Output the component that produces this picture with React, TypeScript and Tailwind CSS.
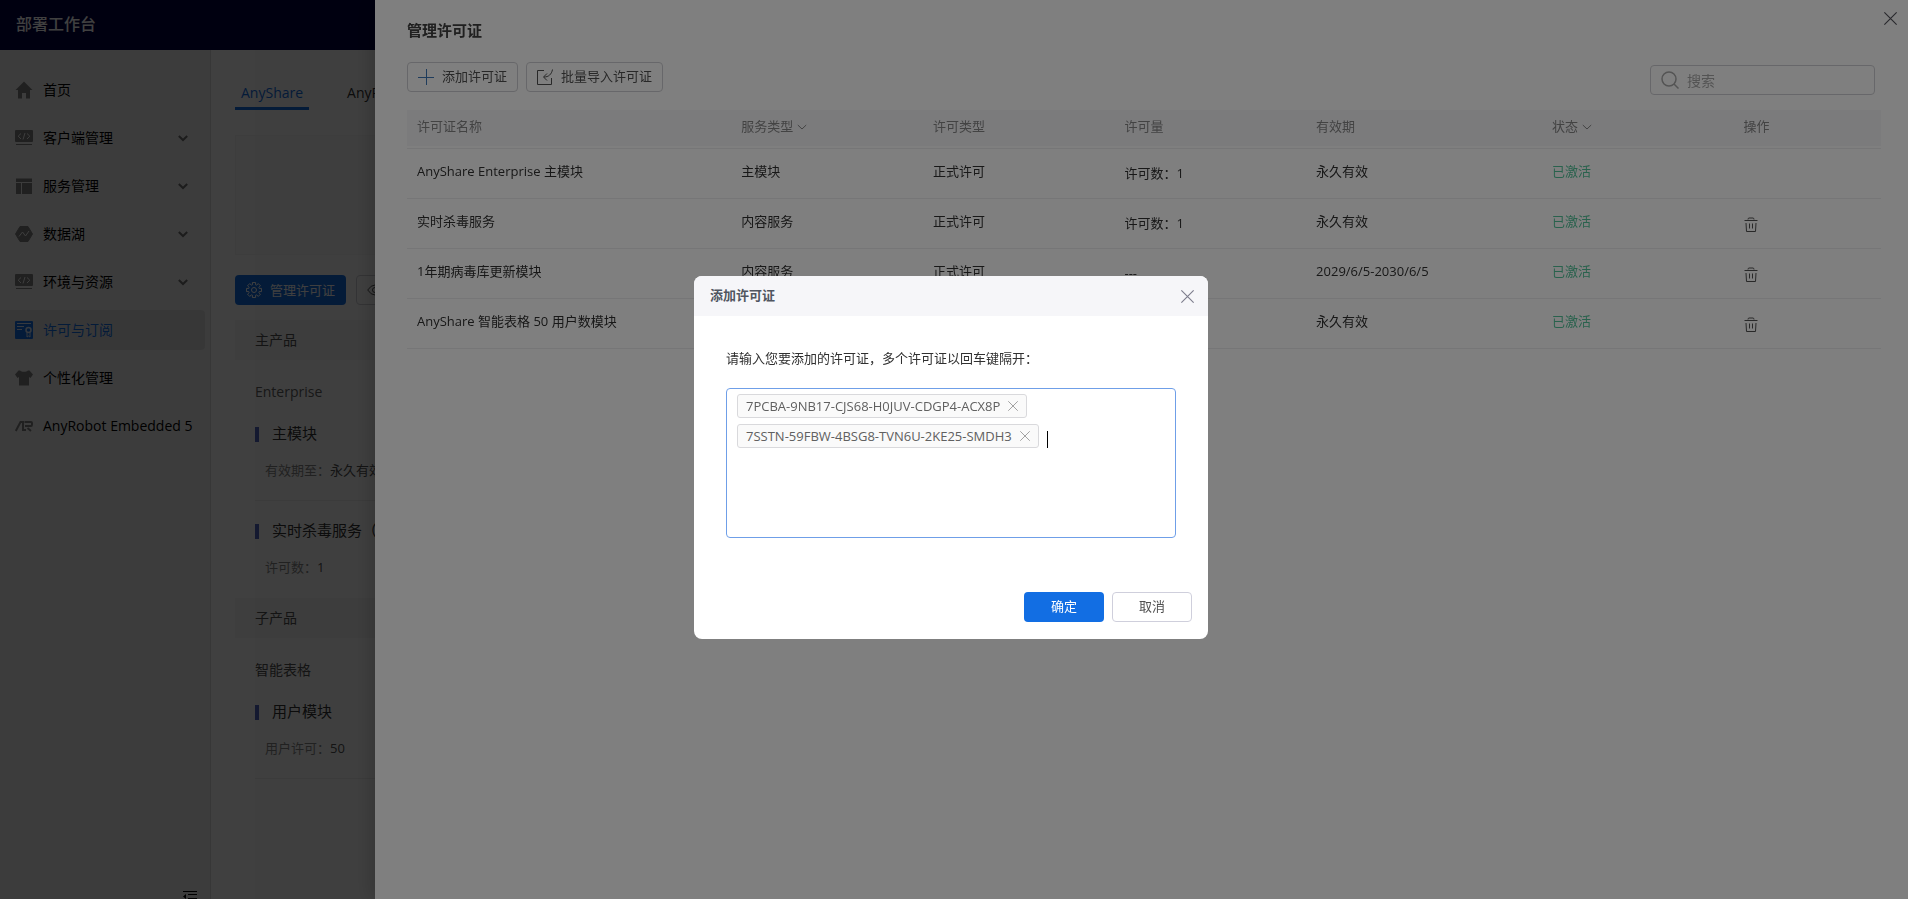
import { useState, type ReactNode } from "react";

const navItems = [
  { icon: <HomeIcon />, label: "首页", expandable: false },
  { icon: <CodeIcon />, label: "客户端管理", expandable: true },
  { icon: <LayoutIcon />, label: "服务管理", expandable: true },
  { icon: <LakeIcon />, label: "数据湖", expandable: true },
  { icon: <CodeIcon />, label: "环境与资源", expandable: true },
  { icon: <LicenseIcon />, label: "许可与订阅", expandable: false, active: true },
  { icon: <ShirtIcon />, label: "个性化管理", expandable: false },
  { icon: <RobotIcon />, label: "AnyRobot Embedded 5", expandable: false },
];

const licenses = [
  { name: "AnyShare Enterprise 主模块", service: "主模块", type: "正式许可", amount: "许可数：1", expire: "永久有效", removable: false },
  { name: "实时杀毒服务", service: "内容服务", type: "正式许可", amount: "许可数：1", expire: "永久有效", removable: true },
  { name: "1年期病毒库更新模块", service: "内容服务", type: "正式许可", amount: "---", expire: "2029/6/5-2030/6/5", removable: true },
  { name: "AnyShare 智能表格 50 用户数模块", service: "内容服务", type: "正式许可", amount: "许可数：50", expire: "永久有效", removable: true },
];

/* Icons */

function HomeIcon() {
  return (
    <svg width="18" height="18" viewBox="0 0 18 18" fill="currentColor">
      <path d="M9 .5 17.5 9H15v8.500h-4V12H7v5.500H3V9H.5z" />
    </svg>
  );
}

function CodeIcon() {
  return (
    <svg width="18" height="18" viewBox="0 0 18 18">
      <rect x="0" y="1" width="18" height="12" rx="1" fill="currentColor" />
      <path d="M1 15.500h16" stroke="currentColor" />
      <path d="M6 4.500 3.200 7.200 6 10M12 4.500l2.800 2.700L12 10M10 4 8 10.500" fill="none" stroke="#f4f4f4" />
    </svg>
  );
}

function LayoutIcon() {
  return (
    <svg width="18" height="18" viewBox="0 0 18 18" fill="currentColor">
      <path d="M1 1.500h16V5H1zM1 6h5v11H1zM7 6h10v11H7z" />
    </svg>
  );
}

function LakeIcon() {
  return (
    <svg width="18" height="18" viewBox="0 0 18 18">
      <path d="M5 1.500h8L17.500 9 13 16.500H5L.5 9z" fill="currentColor" stroke="currentColor" strokeLinejoin="round" />
      <path d="m4 11.500 3.500-4.500 3 4L14 6" fill="none" stroke="#f4f4f4" />
    </svg>
  );
}

function LicenseIcon() {
  return (
    <svg width="18" height="18" viewBox="0 0 18 18">
      <rect width="18" height="18" rx="1" fill="currentColor" />
      <path d="M2 2.500h14M2 5.500h7M2 8.500h5" stroke="#d6e2f5" />
      <circle cx="13.500" cy="9" r="2.500" fill="none" stroke="#d6e2f5" strokeWidth="1.500" />
      <path d="M12 11.500V16l1.500-1 1.500 1v-4.500" fill="none" stroke="#d6e2f5" />
    </svg>
  );
}

function ShirtIcon() {
  return (
    <svg width="18" height="18" viewBox="0 0 18 18" fill="currentColor">
      <path d="M5 1.500c1.500 1.800 6.500 1.800 8 0h1.500L18 5.500 15.500 9 14 8v8.500H4V8L2.500 9 0 5.500l3.500-4z" />
    </svg>
  );
}

function RobotIcon() {
  return (
    <svg width="18" height="18" viewBox="0 0 18 18" fill="none" stroke="currentColor" strokeWidth="2">
      <path d="M.8 14 5.500 5H8v9M9.500 5H16q1 0 1 1v1.500q0 1.500-1 1.500h-6M7.500 13H11M12.500 11l3.500 3" />
    </svg>
  );
}

function GearIcon() {
  const points = Array.from({ length: 8 }, (_, i) =>
    [[-16, 5.5], [-12, 7.7], [12, 7.7], [16, 5.5]].map(([offset, radius]) => {
      const angle = ((i * 45 + offset) * Math.PI) / 180;
      return `${8 + radius * Math.sin(angle)},${8 - radius * Math.cos(angle)}`;
    }),
  ).flat().join(" ");
  return (
    <svg width="16" height="16" viewBox="0 0 16 16" fill="none" stroke="currentColor" strokeLinejoin="round">
      <polygon points={points} />
      <circle cx="8" cy="8" r="2.500" />
    </svg>
  );
}

function EyeIcon() {
  return (
    <svg width="16" height="16" viewBox="0 0 16 16" fill="none" stroke="currentColor">
      <path d="M.7 8Q4 3 8 3t7.300 5Q12 13 8 13T.7 8z" />
      <circle cx="8" cy="8" r="2.500" />
    </svg>
  );
}

function PlusIcon() {
  return (
    <svg width="16" height="16" viewBox="0 0 16 16" stroke="#3f78b8">
      <path d="M8.500 0v16M0 8.500h16" />
    </svg>
  );
}

function ImportIcon() {
  return (
    <svg width="16" height="16" viewBox="0 0 16 16" fill="none" stroke="currentColor">
      <path d="M7 1.500H.5v14h14V9M15.500.5c-1 5-4 7.500-8.500 7.500M10 4.500 6.500 8l3.500 3.500" />
    </svg>
  );
}

function SearchIcon() {
  return (
    <svg width="18" height="18" viewBox="0 0 18 18" fill="none" stroke="currentColor" strokeWidth="1.500">
      <circle cx="8" cy="8" r="7" />
      <path d="m13 13 4.500 4.500" />
    </svg>
  );
}

function TrashIcon() {
  return (
    <svg width="14" height="16" viewBox="0 0 14 16" fill="none" stroke="currentColor">
      <path d="M4 2.500q0-1.500 1-1.500h4q1 0 1 1.500M.5 3.500h13M2 6l.5 8.500h9L12 6M5.500 6.500v5M8.500 6.500v5" />
    </svg>
  );
}

function CloseIcon({ size }: { size: number }) {
  return (
    <svg width={size} height={size} viewBox="0 0 12 12" fill="none" stroke="currentColor">
      <path d="m.3.3 11.400 11.400m0-11.400L.3 11.700" />
    </svg>
  );
}

function ChevronIcon({ bold = false }: { bold?: boolean }) {
  return (
    <svg width="10" height="10" viewBox="0 0 10 10" fill="none" stroke="currentColor" strokeWidth={bold ? 2 : 1}>
      <path d="m.8 3 4.200 4 4.200-4" />
    </svg>
  );
}

function CollapseIcon() {
  return (
    <svg width="14" height="14" viewBox="0 0 14 14" fill="currentColor">
      <path d="M0 1h14v1H0zM5 4h9v1H5zM5 8h9v1H5zM0 12h14v1H0zM0 6.500 3 4v5z" />
    </svg>
  );
}

/* Building blocks */

function ToolButton({ icon, children }: { icon: ReactNode; children?: ReactNode }) {
  return (
    <button className="flex h-[30px] items-center gap-2 rounded border border-[#cfcfd4] px-2.5 text-[13px] whitespace-nowrap text-[#505050]">
      {icon}
      {children}
    </button>
  );
}

function ProductItem({ title, meta, value, divider = true }: { title: string; meta: string; value: string; divider?: boolean }) {
  return (
    <div className={`ml-5 border-b pt-5 pb-5 ${divider ? "border-[#ececec]" : "border-transparent"}`}>
      <h4 className="flex h-5 items-center gap-[13px] text-[15px] whitespace-nowrap">
        <span className="h-[15px] w-1 bg-[#5066c0]" />
        {title}
      </h4>
      <p className="mt-4 ml-2.5 text-[13px] leading-5 whitespace-nowrap text-[#505050]">
        <span className="text-[#868686]">{meta}：</span>
        {value}
      </p>
    </div>
  );
}

function Sidebar() {
  return (
    <aside className="flex w-[211px] shrink-0 flex-col border-r border-[#dcdcdc] bg-[#f0f0f0] pt-5">
      <nav className="flex flex-1 flex-col gap-2 pr-[5px]">
        {navItems.map((item) => (
          <a
            key={item.label}
            href="#"
            className={`flex h-10 items-center gap-2.5 rounded-r-sm pr-[17px] pl-[15px] text-sm whitespace-nowrap ${item.active ? "bg-[#dcdcdc] text-[#126ee3]" : "text-black"}`}
          >
            <span className={item.active ? "" : "text-[#808080]"}>{item.icon}</span>
            <span className="flex-1">{item.label}</span>
            {item.expandable && (
              <span className="text-[#707070]">
                <ChevronIcon bold />
              </span>
            )}
          </a>
        ))}
      </nav>
      <button aria-label="收起" className="mr-[13px] -mb-[5px] shrink-0 self-end">
        <CollapseIcon />
      </button>
    </aside>
  );
}

function ProductPage() {
  return (
    <main className="flex-1 px-6 pt-[26px] text-sm text-[#303030]">
      <div className="flex gap-8">
        <button className="border-b-3 border-[#126ee3] px-1.5 pt-[7px] pb-1 text-[#126ee3]">AnyShare</button>
        <button className="border-b-3 border-transparent px-1.5 pt-[7px] pb-1">AnyRobot</button>
      </div>
      <div className="mt-[25px] h-[120px] border border-[#f4f4f4] bg-[#fafafa]" />
      <div className="mt-5 flex gap-2.5">
        <button className="flex h-[30px] items-center gap-2 rounded bg-[#126ee3] px-[11px] text-[13px] text-white">
          <GearIcon />
          管理许可证
        </button>
        <ToolButton icon={<EyeIcon />} />
      </div>
      <h2 className="mt-[15px] flex h-10 items-center bg-[#f5f5f5] px-5 text-[#505050]">主产品</h2>
      <h3 className="pt-5 pl-5 leading-6 text-[#606060]">Enterprise</h3>
      <ProductItem title="主模块" meta="有效期至" value="永久有效" />
      <ProductItem title="实时杀毒服务（" meta="许可数" value="1" divider={false} />
      <h2 className="flex h-10 items-center bg-[#f5f5f5] px-5 text-[#505050]">子产品</h2>
      <h3 className="pt-5 pl-5 leading-6 text-[#505050]">智能表格</h3>
      <ProductItem title="用户模块" meta="用户许可" value="50" />
    </main>
  );
}

function LicenseDrawer() {
  return (
    <section className="fixed inset-y-0 right-0 left-[375px] bg-white pr-[27px] pl-8 text-[13px] text-[#303030] shadow-[-6px_0_16px_rgba(0,0,0,0.15)]">
      <button aria-label="关闭" className="absolute top-3 right-[11px] text-[#505058]">
        <CloseIcon size={13} />
      </button>
      <h1 className="pt-5 text-[15px] leading-5 font-bold text-[#404040]">管理许可证</h1>
      <div className="mt-[22px] flex h-12 items-start gap-2">
        <ToolButton icon={<PlusIcon />}>添加许可证</ToolButton>
        <ToolButton icon={<ImportIcon />}>批量导入许可证</ToolButton>
        <label className="mt-[3px] mr-1.5 ml-auto flex h-[30px] w-[225px] items-center gap-2 rounded border border-[#cfcfd4] px-2.5 text-[#a8a8a8]">
          <SearchIcon />
          <input
            type="text"
            aria-label="搜索"
            placeholder="搜索"
            className="min-w-0 flex-1 pt-0.5 text-sm outline-none placeholder:text-[#a8a8a8]"
          />
        </label>
      </div>
      <table className="w-full table-fixed border-separate border-spacing-0 text-left">
        <thead className="text-[#868686]">
          <tr className="[&>th]:h-[38px] [&>th]:border-b-2 [&>th]:border-white [&>th]:bg-[#f6f6f9] [&>th]:bg-clip-padding [&>th]:px-2.5 [&>th]:pb-0.5 [&>th]:font-normal">
            <th className="w-[22%]">许可证名称</th>
            <th className="w-[13%]">
              <span className="flex items-center gap-1">服务类型 <ChevronIcon /></span>
            </th>
            <th className="w-[13%]">许可类型</th>
            <th className="w-[13%]">许可量</th>
            <th className="w-[16%]">有效期</th>
            <th className="w-[13%]">
              <span className="flex items-center gap-1">状态 <ChevronIcon /></span>
            </th>
            <th className="w-[10%]">操作</th>
          </tr>
        </thead>
        <tbody>
          {licenses.map((row) => (
            <tr
              key={row.name}
              className="[&>td]:h-[50px] [&>td]:border-t [&>td]:border-[#ececee] [&>td]:px-2.5 last:[&>td]:h-[51px] last:[&>td]:border-b"
            >
              <td className="pb-1">{row.name}</td>
              <td className="pb-1">{row.service}</td>
              <td className="pb-1">{row.type}</td>
              <td>{row.amount}</td>
              <td className="pb-1">{row.expire}</td>
              <td className="pb-1 text-[#52c49a]">已激活</td>
              <td className="pt-0.5">
                {row.removable && (
                  <button aria-label="删除" className="block text-[#505050]">
                    <TrashIcon />
                  </button>
                )}
              </td>
            </tr>
          ))}
        </tbody>
      </table>
    </section>
  );
}

function AddLicenseDialog() {
  const [codes, setCodes] = useState([
    "7PCBA-9NB17-CJS68-H0JUV-CDGP4-ACX8P",
    "7SSTN-59FBW-4BSG8-TVN6U-2KE25-SMDH3",
  ]);

  return (
    <div role="dialog" aria-label="添加许可证" className="w-[514px] overflow-hidden rounded-lg bg-white text-[13px] text-[#303030]">
      <header className="flex h-10 items-center justify-between bg-[#f6f6f9] pr-3.5 pl-4">
        <h2 className="font-bold text-[#505560]">添加许可证</h2>
        <button aria-label="关闭" className="text-[#7c7c8c]">
          <CloseIcon size={13} />
        </button>
      </header>
      <div className="px-8 pt-8">
        <label htmlFor="license-code" className="block leading-5">
          请输入您要添加的许可证，多个许可证以回车键隔开：
        </label>
        <div className="mt-5 flex h-[150px] flex-wrap content-start items-center gap-x-2 gap-y-1.5 rounded border border-[#6f9fe8] px-2.5 pt-[5px]">
          {codes.map((code) => (
            <span key={code} className="flex h-6 items-center gap-2 rounded-[3px] border border-[#d9d9dc] bg-[#fafafa] px-2 text-[#606060]">
              <span className="pt-0.5">{code}</span>
              <button aria-label="移除" className="text-[#909090]" onClick={() => setCodes(codes.filter((c) => c !== code))}>
                <CloseIcon size={10} />
              </button>
            </span>
          ))}
          <span className="flex h-6 flex-1 items-end">
            <span className="h-[17px] w-px bg-black" />
            <input id="license-code" type="text" className="h-5 w-full min-w-0 caret-transparent outline-none" />
          </span>
        </div>
      </div>
      <footer className="mt-[54px] flex justify-end gap-2 px-4 pb-[17px]">
        <button className="h-[30px] w-20 rounded bg-[#126ee3] text-white">确定</button>
        <button className="h-[30px] w-20 rounded border border-[#cfcfdc] text-[#505050]">取消</button>
      </footer>
    </div>
  );
}

export default function App() {
  return (
    <div className="flex h-screen flex-col overflow-hidden bg-white font-['Open_Sans','Noto_Sans_CJK_SC',sans-serif]">
      <header className="flex h-[50px] shrink-0 items-center bg-[#000040] px-4 pb-0.5 text-base font-medium text-white">
        部署工作台
      </header>
      <div className="flex min-h-0 flex-1">
        <Sidebar />
        <ProductPage />
      </div>

      {/* Drawer with its mask */}
      <div className="fixed inset-0 bg-black/50" />
      <LicenseDrawer />

      {/* Dialog with its mask */}
      <div className="fixed inset-0 flex items-center justify-center bg-black/50 pt-4 pr-1.5">
        <AddLicenseDialog />
      </div>
    </div>
  );
}
